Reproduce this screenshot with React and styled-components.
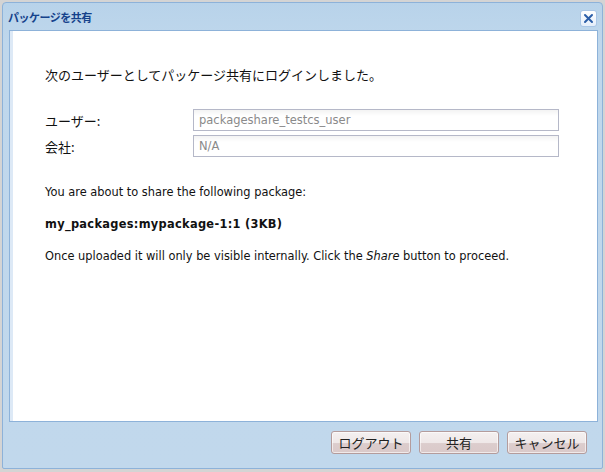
import React from "react";
import styled, { createGlobalStyle } from "styled-components";

const Global = createGlobalStyle`
  html, body { margin: 0; padding: 0; }
  body {
    background: #d4d4d4;
    font-family: "DejaVu Sans", "Noto Sans CJK JP", sans-serif;
    width: 605px;
    height: 472px;
    overflow: hidden;
  }
`;

const Page = styled.div`
  padding: 2px 2px 3px 2px;
  box-sizing: border-box;
  width: 605px;
  height: 472px;
`;

const Window = styled.div`
  box-sizing: border-box;
  width: 601px;
  height: 467px;
  border: 1px solid #8db2d9;
  border-radius: 4px 4px 2px 2px;
  background: linear-gradient(#b8d3ea, #bfd7ec 40px, #c1d8ec);
  display: flex;
  flex-direction: column;
`;

const Header = styled.div`
  height: 27px;
  padding: 0 5px 0 5px;
  display: flex;
  align-items: center;
  justify-content: space-between;
`;

const Title = styled.div`
  font-family: "Noto Sans CJK JP", sans-serif;
  font-weight: bold;
  font-size: 11px;
  letter-spacing: -0.5px;
  color: #15428b;
  padding-top: 1px;
`;

const Close = styled.div`
  width: 17px;
  height: 17px;
  box-sizing: border-box;
  border: 1px solid #a9c6e6;
  border-radius: 3px;
  background: linear-gradient(#ffffff, #e4eefa);
  display: flex;
  align-items: center;
  justify-content: center;
  margin-top: 3px;
`;

const Body = styled.div`
  flex: 1;
  margin: 0 4px 0 6px;
  background: #fff;
  border: 1px solid #8db2d9;
  box-shadow: inset 3px 0 0 #dde9f6;
  padding: 35px 0 0 35px;
  box-sizing: border-box;
`;

const Intro = styled.p`
  margin: 0 0 26px 0;
  font-family: "Noto Sans CJK JP", sans-serif;
  font-size: 13px;
  line-height: 17px;
  color: #111;
`;

const Form = styled.div`
  display: grid;
  grid-template-columns: 148px 366px;
  row-gap: 4px;
  margin-bottom: 27px;
`;

const Label = styled.label`
  font-family: "Noto Sans CJK JP", sans-serif;
  font-size: 13px;
  color: #111;
  display: flex;
  align-items: center;
`;

const Field = styled.div`
  height: 22px;
  box-sizing: border-box;
  border: 1px solid #b5b8c8;
  background: linear-gradient(#f3f3f3, #ffffff 6px);
  font-family: "DejaVu Sans", sans-serif;
  font-size: 11.5px;
  color: #8a8a8a;
  padding: 0 5px;
  display: flex;
  align-items: center;
`;

const Text = styled.p`
  margin: 0 0 16px 0;
  font-size: 11.4px;
  letter-spacing: ${(p) => (p.$bold ? "0.3px" : "0")};
  line-height: 16px;
  color: #111;
  font-weight: ${(p) => (p.$bold ? "bold" : "normal")};
`;

const Footer = styled.div`
  height: 46px;
  padding: 9px 15px 0 0;
  box-sizing: border-box;
  display: flex;
  justify-content: flex-end;
  align-items: flex-start;
  gap: 8px;
`;

const Button = styled.button`
  width: 80px;
  height: 23px;
  border: 1px solid #b49c9c;
  border-radius: 3px;
  background: linear-gradient(#f4f0f0 0%, #efe8e8 50%, #dccdcd 55%, #dac9c9 100%);
  box-shadow: inset 0 0 0 1px rgba(255,255,255,0.6);
  font-family: "Noto Sans CJK JP", sans-serif;
  font-size: 13px;
  color: #222;
  padding: 0;
  cursor: pointer;
`;

export default function App() {
  return (
    <Page>
      <Global />
      <Window>
        <Header>
          <Title>パッケージを共有</Title>
          <Close>
            <svg width="11" height="11" viewBox="0 0 11 11">
              <path d="M2 2 L9 9 M9 2 L2 9" stroke="#2b5ea8" strokeWidth="2" strokeLinecap="round" />
            </svg>
          </Close>
        </Header>
        <Body>
          <Intro>次のユーザーとしてパッケージ共有にログインしました。</Intro>
          <Form>
            <Label>ユーザー:</Label>
            <Field>packageshare_testcs_user</Field>
            <Label>会社:</Label>
            <Field>N/A</Field>
          </Form>
          <Text>You are about to share the following package:</Text>
          <Text $bold>my_packages:mypackage-1:1 (3KB)</Text>
          <Text>
            Once uploaded it will only be visible internally. Click the <i>Share</i> button to proceed.
          </Text>
        </Body>
        <Footer>
          <Button>ログアウト</Button>
          <Button>共有</Button>
          <Button>キャンセル</Button>
        </Footer>
      </Window>
    </Page>
  );
}
